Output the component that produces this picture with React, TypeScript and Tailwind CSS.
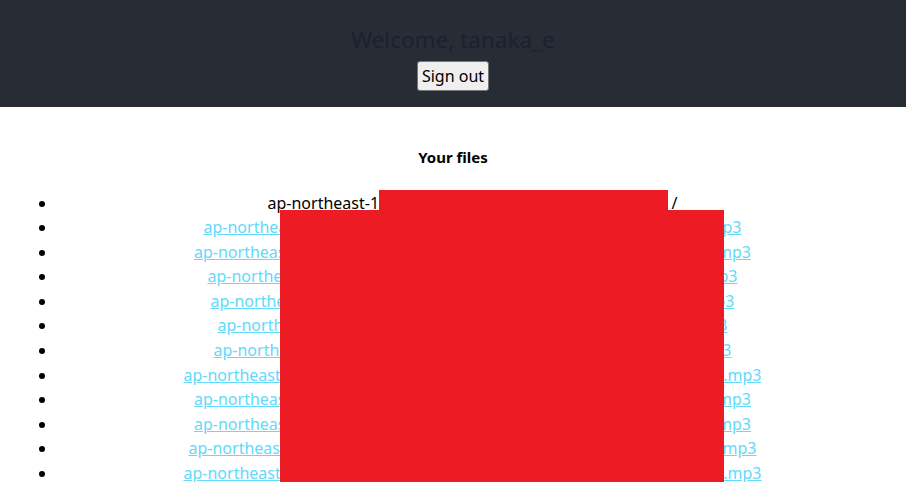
const rows = [
  { left: 203, right: 741 },
  { left: 194, right: 751 },
  { left: 207, right: 737 },
  { left: 210, right: 734 },
  { left: 217, right: 727 },
  { left: 213, right: 731 },
  { left: 183, right: 761 },
  { left: 194, right: 751 },
  { left: 194, right: 751 },
  { left: 188, right: 756 },
  { left: 183, right: 761 },
];

export default function App() {
  return (
    <div className="relative min-h-[482px] overflow-hidden bg-white font-['Noto_Sans',sans-serif] text-black">
      <header className="flex h-[107px] flex-col items-center bg-[#282c34] pt-[24px]">
        <p className="text-[22.5px] leading-[31px] text-[#1a2130]">Welcome, tanaka_e</p>
        <button className="mt-[6px] h-[30px] w-[72px] rounded-[3px] border border-[#767676] bg-[#efefef] text-[16px] leading-none text-black">
          Sign out
        </button>
      </header>

      <h3 className="mt-[39px] text-center text-[15px] font-bold leading-[22px]">Your files</h3>

      <ul className="mt-[22.5px] list-disc pl-[57px] pr-[18px] text-[16px] leading-[24.6px]">
        <li className="text-center">
          <span className="inline-flex w-[410px] justify-between">
            <span>ap-northeast-1:0</span>
            <span>/</span>
          </span>
        </li>
        {rows.map((r, i) => (
          <li key={i} className="text-center">
            <a
              href="#"
              className="inline-flex justify-between text-[#61dafb]"
              style={{ width: r.right - r.left }}
            >
              <span className="underline">ap-northeast-1:</span>
              <span className="underline">.mp3</span>
            </a>
          </li>
        ))}
      </ul>

      {/* redaction boxes */}
      <div className="absolute left-[379px] top-[190px] h-[21px] w-[289px] bg-[#ed1c24]" />
      <div className="absolute left-[280px] top-[210px] h-[272px] w-[444px] bg-[#ed1c24]" />
    </div>
  );
}
